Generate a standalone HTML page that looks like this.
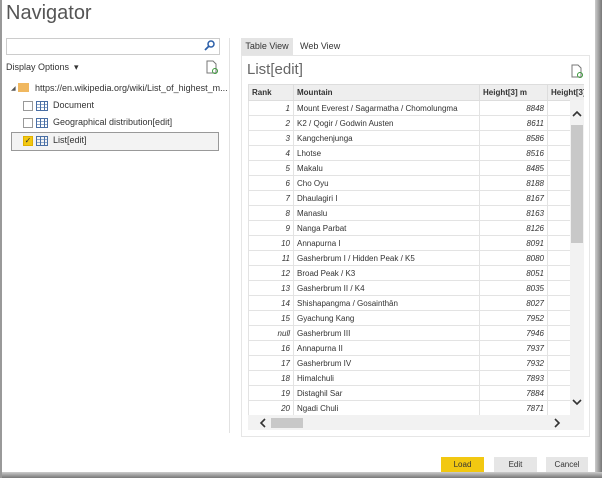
<!DOCTYPE html><html><head><style>
body{margin:0;width:602px;height:478px;background:#fff;font-family:"Liberation Sans",sans-serif;position:relative;overflow:hidden;font-size:9px;color:#333}
.a{position:absolute}
table{border-collapse:collapse;font-size:8px}
td{height:14px;border:1px solid #e3e3e3;padding:0 3px;white-space:nowrap;overflow:hidden}
th{height:15px;border:1px solid #ddd;background:#eee;text-align:left;padding:0 3px;font-size:8px;color:#333;white-space:nowrap;overflow:hidden}
.r{text-align:right;font-style:italic}
.cb{width:8px;height:8px;border:1px solid #999;background:#fff}
.ti{width:10px;height:8px;border:1px solid #4a6fa5;background:repeating-linear-gradient(90deg,transparent 0 3px,#4a6fa5 3px 4px),repeating-linear-gradient(0deg,transparent 0 2px,#8fa9cc 2px 3px)}
.btn{height:15px;line-height:15px;text-align:center;font-size:8px;background:#e6e6e6}
</style></head><body>
<div class="a" style="right:0;top:0;width:7px;height:478px;background:linear-gradient(90deg,#ccc,#777)"></div>
<div class="a" style="left:0;bottom:0;width:602px;height:6px;background:linear-gradient(180deg,#ccc,#777)"></div>
<div class="a" style="left:0;top:0;width:2px;height:478px;background:#999"></div>
<div class="a" style="left:6px;top:2px;font-size:20px;color:#555">Navigator</div>
<div class="a" style="left:6px;top:38px;width:212px;height:15px;border:1px solid #ccc"></div>
<svg class="a" style="left:204px;top:40px" width="11" height="11"><circle cx="7" cy="4" r="3" fill="none" stroke="#2a5ea8" stroke-width="1.5"/><line x1="5" y1="6" x2="1" y2="10" stroke="#2a5ea8" stroke-width="1.8"/></svg>
<div class="a" style="left:6px;top:62px;font-size:9px">Display Options &nbsp;▾</div>
<svg class="a" style="left:206px;top:60px" width="12" height="14"><path d="M1 1h6l3 3v9H1z" fill="none" stroke="#777"/><circle cx="9" cy="11" r="2.5" fill="none" stroke="#3a9a3a"/></svg>
<div class="a" style="left:11px;top:85px;font-size:6px;color:#555">◢</div>
<div class="a" style="left:18px;top:83px;width:11px;height:9px;background:#f0b860"></div>
<div class="a" style="left:35px;top:83px">https://en.wikipedia.org/wiki/List_of_highest_m...</div>
<div class="a cb" style="left:23px;top:101px"></div><div class="a ti" style="left:36px;top:101px"></div><div class="a" style="left:53px;top:100px">Document</div>
<div class="a cb" style="left:23px;top:118px"></div><div class="a ti" style="left:36px;top:118px"></div><div class="a" style="left:53px;top:117px">Geographical distribution[edit]</div>
<div class="a" style="left:11px;top:132px;width:206px;height:17px;border:1px solid #999;background:#f3f3f3"></div>
<div class="a cb" style="left:23px;top:136px;background:#f2c811;border-color:#e0b000;font-size:8px;line-height:8px;text-align:center">✓</div><div class="a ti" style="left:36px;top:136px"></div><div class="a" style="left:53px;top:135px">List[edit]</div>
<div class="a" style="left:229px;top:38px;width:1px;height:395px;background:#e2e2e2"></div>
<div class="a" style="left:241px;top:38px;width:52px;height:17px;background:#e4e4e4;line-height:17px;text-align:center">Table View</div>
<div class="a" style="left:300px;top:38px;line-height:17px">Web View</div>
<div class="a" style="left:241px;top:55px;width:347px;height:380px;border:1px solid #e6e6e6"></div>
<div class="a" style="left:247px;top:61px;font-size:15px;color:#666">List[edit]</div>
<svg class="a" style="left:571px;top:64px" width="12" height="14"><path d="M1 1h6l3 3v9H1z" fill="none" stroke="#777"/><circle cx="9" cy="11" r="2.5" fill="none" stroke="#3a9a3a"/></svg>
<div class="a" style="left:248px;top:84px;width:336px;height:331px;overflow:hidden">
<table style="width:345px;table-layout:fixed"><col style="width:45px"><col style="width:186px"><col style="width:68px"><col style="width:46px">
<tr><th>Rank</th><th>Mountain</th><th>Height[3] m</th><th>Height[3]</th></tr>
<tr><td class="r">1</td><td>Mount Everest / Sagarmatha / Chomolungma</td><td class="r">8848</td><td></td></tr>
<tr><td class="r">2</td><td>K2 / Qogir / Godwin Austen</td><td class="r">8611</td><td></td></tr>
<tr><td class="r">3</td><td>Kangchenjunga</td><td class="r">8586</td><td></td></tr>
<tr><td class="r">4</td><td>Lhotse</td><td class="r">8516</td><td></td></tr>
<tr><td class="r">5</td><td>Makalu</td><td class="r">8485</td><td></td></tr>
<tr><td class="r">6</td><td>Cho Oyu</td><td class="r">8188</td><td></td></tr>
<tr><td class="r">7</td><td>Dhaulagiri I</td><td class="r">8167</td><td></td></tr>
<tr><td class="r">8</td><td>Manaslu</td><td class="r">8163</td><td></td></tr>
<tr><td class="r">9</td><td>Nanga Parbat</td><td class="r">8126</td><td></td></tr>
<tr><td class="r">10</td><td>Annapurna I</td><td class="r">8091</td><td></td></tr>
<tr><td class="r">11</td><td>Gasherbrum I / Hidden Peak / K5</td><td class="r">8080</td><td></td></tr>
<tr><td class="r">12</td><td>Broad Peak / K3</td><td class="r">8051</td><td></td></tr>
<tr><td class="r">13</td><td>Gasherbrum II / K4</td><td class="r">8035</td><td></td></tr>
<tr><td class="r">14</td><td>Shishapangma / Gosainthān</td><td class="r">8027</td><td></td></tr>
<tr><td class="r">15</td><td>Gyachung Kang</td><td class="r">7952</td><td></td></tr>
<tr><td class="r">null</td><td>Gasherbrum III</td><td class="r">7946</td><td></td></tr>
<tr><td class="r">16</td><td>Annapurna II</td><td class="r">7937</td><td></td></tr>
<tr><td class="r">17</td><td>Gasherbrum IV</td><td class="r">7932</td><td></td></tr>
<tr><td class="r">18</td><td>Himalchuli</td><td class="r">7893</td><td></td></tr>
<tr><td class="r">19</td><td>Distaghil Sar</td><td class="r">7884</td><td></td></tr>
<tr><td class="r">20</td><td>Ngadi Chuli</td><td class="r">7871</td><td></td></tr>
<tr><td></td><td></td><td></td><td></td></tr>
</table></div>
<div class="a" style="left:570px;top:100px;width:14px;height:315px;background:#f2f2f2"></div>
<div class="a" style="left:571px;top:125px;width:12px;height:118px;background:#c8c8c8"></div>
<svg class="a" style="left:572px;top:110px" width="10" height="8"><path d="M1 6L5 2L9 6" fill="none" stroke="#333" stroke-width="1.6"/></svg>
<svg class="a" style="left:572px;top:398px" width="10" height="8"><path d="M1 2L5 6L9 2" fill="none" stroke="#333" stroke-width="1.6"/></svg>
<div class="a" style="left:248px;top:415px;width:336px;height:15px;background:#f2f2f2"></div>
<div class="a" style="left:271px;top:418px;width:32px;height:10px;background:#c8c8c8"></div>
<svg class="a" style="left:259px;top:418px" width="8" height="10"><path d="M6 1L2 5L6 9" fill="none" stroke="#333" stroke-width="1.6"/></svg>
<svg class="a" style="left:553px;top:418px" width="8" height="10"><path d="M2 1L6 5L2 9" fill="none" stroke="#333" stroke-width="1.6"/></svg>
<div class="a btn" style="left:441px;top:457px;width:43px;background:#f2c811">Load</div>
<div class="a btn" style="left:494px;top:457px;width:43px">Edit</div>
<div class="a btn" style="left:546px;top:457px;width:42px">Cancel</div>
</body></html>
